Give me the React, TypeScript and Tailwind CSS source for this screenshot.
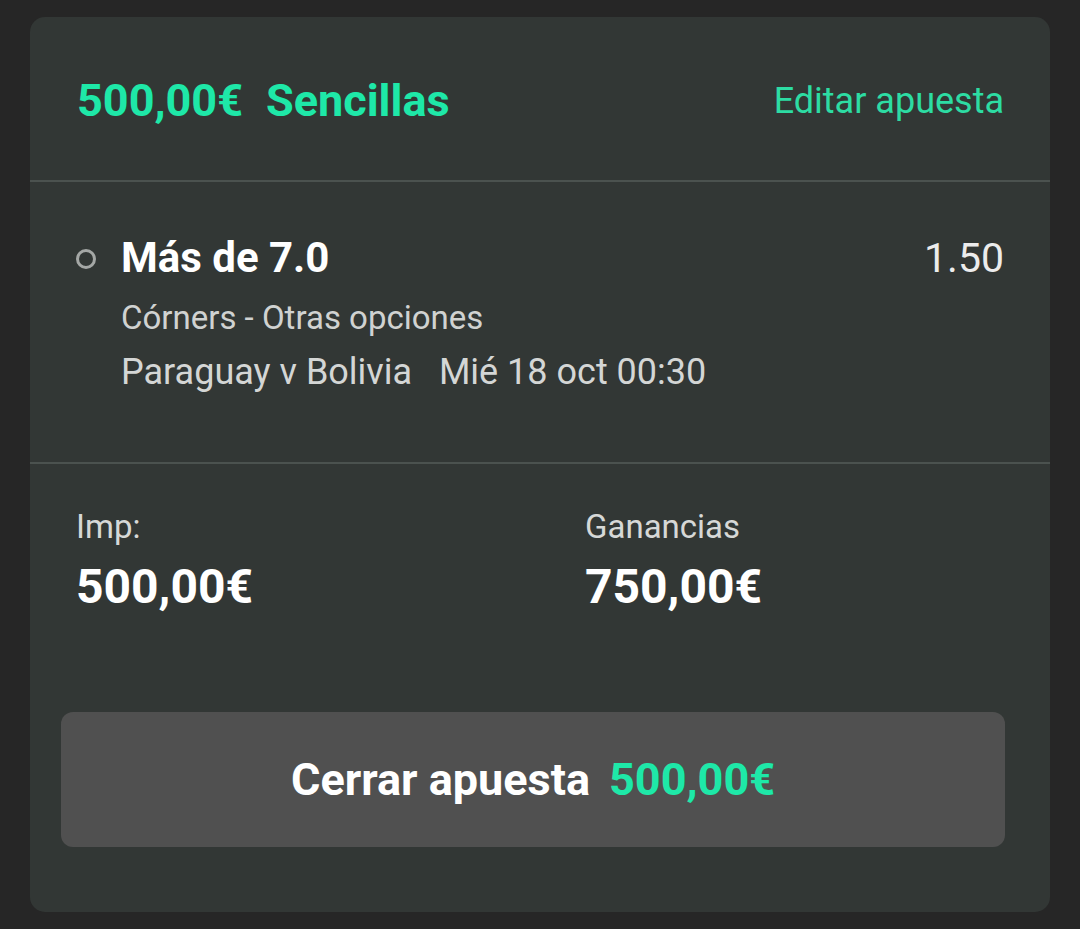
import React from "react";

const font = { fontFamily: "Roboto, 'Noto Sans', sans-serif" };

export default function App() {
  return (
    <div className="min-h-[929px] w-[1080px] bg-[#262626] pt-[17px] pb-[17px]" style={font}>
      <div className="mx-[30px] h-[895px] rounded-[15px] bg-[#323735] flex flex-col">
        {/* header */}
        <div className="h-[163px] flex items-center justify-between pl-[47px] pr-[46px] pt-[5px]">
          <div className="flex items-center gap-[23px] text-[45px] font-bold text-[#1ee8a8] leading-[52px]">
            <span>500,00€</span>
            <span>Sencillas</span>
          </div>
          <span className="text-[36px] text-[#2ddca3] leading-[44px]">Editar apuesta</span>
        </div>
        <div className="h-[2px] bg-[#4b524f]" />

        {/* selection */}
        <div className="h-[280px] flex pl-[46px] pr-[46px] pt-[52px]">
          <div className="w-[45px] pt-[15px]">
            <div className="w-[20px] h-[20px] rounded-full border-[3px] border-[#a4a7a5]" />
          </div>
          <div className="flex-1 flex flex-col">
            <div className="flex items-center justify-between h-[48px]">
              <span className="text-[42px] font-bold text-white leading-[48px]">Más de 7.0</span>
              <span className="text-[41px] text-[#ececec] leading-[48px]">1.50</span>
            </div>
            <span className="mt-[16px] text-[33px] leading-[40px] text-[#d0d2d1]">Córners - Otras opciones</span>
            <span className="mt-[14px] text-[36px] leading-[40px] text-[#d4d6d5] whitespace-pre">Paraguay v Bolivia   Mié 18 oct 00:30</span>
          </div>
        </div>
        <div className="h-[2px] bg-[#4b524f]" />

        {/* totals */}
        <div className="grid grid-cols-2 pl-[46px] pr-[46px] pt-[43px]">
          <div className="flex flex-col">
            <span className="text-[33px] leading-[40px] text-[#d6d8d7]">Imp:</span>
            <span className="mt-[12px] text-[48px] leading-[56px] font-bold text-white">500,00€</span>
          </div>
          <div className="flex flex-col pl-[45px]">
            <span className="text-[33px] leading-[40px] text-[#d6d8d7]">Ganancias</span>
            <span className="mt-[12px] text-[48px] leading-[56px] font-bold text-white">750,00€</span>
          </div>
        </div>

        <div className="mt-[97px] ml-[31px] mr-[45px] h-[135px] rounded-[12px] bg-[#505050] flex items-center justify-center gap-[19px] text-[45px] leading-[52px] font-bold">
          <span className="text-white">Cerrar apuesta</span>
          <span className="text-[#1ee8a8]">500,00€</span>
        </div>
      </div>
    </div>
  );
}
